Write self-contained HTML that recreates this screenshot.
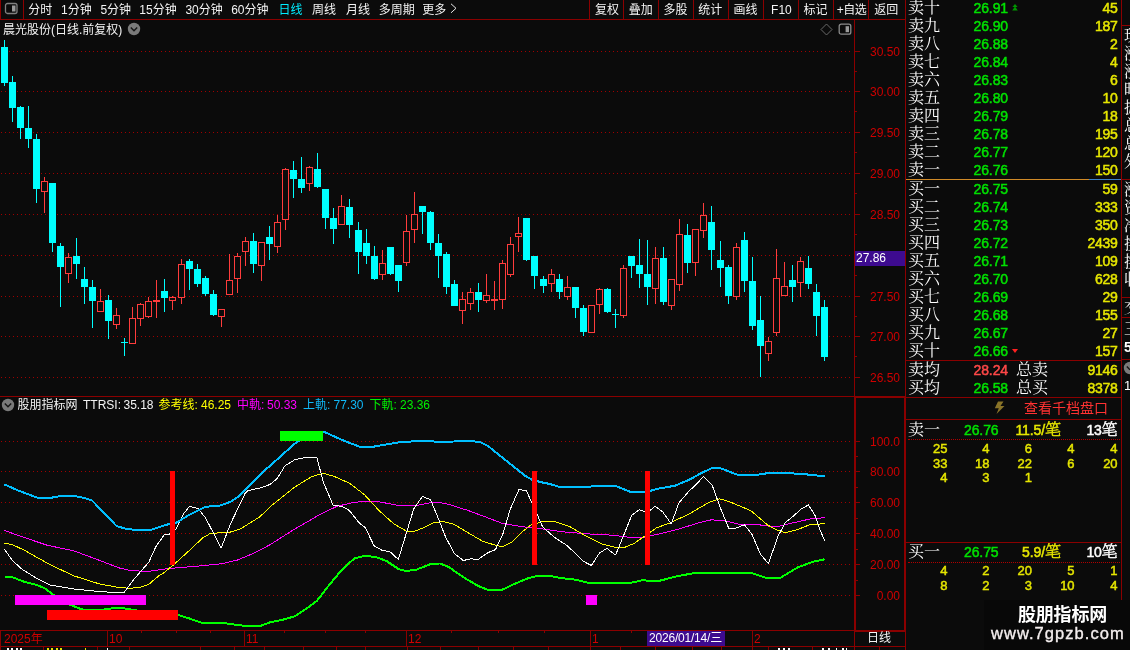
<!DOCTYPE html>
<html lang="zh-CN"><head><meta charset="utf-8"><title>晨光股份 日线</title>
<style>
html,body{margin:0;padding:0;background:#0b0b0b;}
body{width:1130px;height:650px;position:relative;overflow:hidden;font-family:"Liberation Sans","Noto Sans CJK SC",sans-serif;color:#fff;}
.abs{position:absolute;}
.vline{width:1px;background:#8b0000;}
.hline{height:1px;background:#8b0000;}
.tick{height:1px;background:#8b0000;}
.tb{top:1.7px;font-size:12px;line-height:17px;white-space:nowrap;color:#f4f4f4;}
.cy{color:#00ecff;}
.axl{left:856px;width:44px;text-align:right;font-size:12px;line-height:14px;color:#d00000;}
.t12{font-size:12px;line-height:14px;white-space:nowrap;}
.row{left:906px;width:215px;height:18px;}
.row span{position:absolute;top:0;white-space:nowrap;}
.lab{left:2px;font-family:"Liberation Serif","Noto Serif CJK SC",serif;font-size:16px;line-height:18px;color:#fff;font-weight:400;}
.pr{left:67.5px;font-weight:normal;-webkit-text-stroke:0.5px currentColor;font-size:14px;line-height:18px;letter-spacing:-0.1px;}
.vol{right:3.5px;font-weight:normal;-webkit-text-stroke:0.5px currentColor;font-size:14px;line-height:18px;color:#e6e600;letter-spacing:-0.3px;}
.gr{color:#00e000;}
.rd{color:#ff4848;}
.num{font-weight:normal;-webkit-text-stroke:0.45px currentColor;font-size:13px;line-height:14px;color:#e6e600;text-align:right;width:40px;letter-spacing:0;}
.side{left:1124px;font-family:"Liberation Serif","Noto Serif CJK SC",serif;font-size:16px;line-height:18px;color:#fff;white-space:nowrap;}
#wrap{position:absolute;left:0;top:0;width:1130px;height:650px;will-change:transform;}
</style></head><body><div id="wrap">

<!-- toolbar -->
<div class="abs hline" style="left:0;top:19px;width:906px"></div>
<div class="abs vline" style="left:0;top:0;height:19px"></div>
<div class="abs vline" style="left:23px;top:0;height:19px"></div>
<svg class="abs" style="left:4px;top:2px" width="15" height="14" viewBox="0 0 15 14"><rect x="1.5" y="1.5" width="11.5" height="10" rx="2" fill="none" stroke="#808080" stroke-width="1.3"/><rect x="8" y="3.5" width="3.5" height="6" fill="#9a9a9a"/></svg>
<span class="abs tb" style="left:28.2px">分时</span><span class="abs tb" style="left:61.1px">1分钟</span><span class="abs tb" style="left:100.4px">5分钟</span><span class="abs tb" style="left:139.3px">15分钟</span><span class="abs tb" style="left:185.4px">30分钟</span><span class="abs tb" style="left:231.2px">60分钟</span><span class="abs tb cy" style="left:278.5px">日线</span><span class="abs tb" style="left:311.9px">周线</span><span class="abs tb" style="left:345.9px">月线</span><span class="abs tb" style="left:378.8px">多周期</span><span class="abs tb" style="left:422.3px">更多</span><svg class="abs" style="left:450px;top:2.5px" width="8" height="11" viewBox="0 0 8 11"><path d="M1 0.8 L6 5.3 L1 9.8" stroke="#e8e8e8" stroke-width="1" fill="none"/></svg><div class="abs vline" style="left:589px;top:0;height:19px"></div><div class="abs vline" style="left:623px;top:0;height:19px"></div><div class="abs vline" style="left:658px;top:0;height:19px"></div><div class="abs vline" style="left:693px;top:0;height:19px"></div><div class="abs vline" style="left:728px;top:0;height:19px"></div><div class="abs vline" style="left:763px;top:0;height:19px"></div><div class="abs vline" style="left:798px;top:0;height:19px"></div><div class="abs vline" style="left:833px;top:0;height:19px"></div><div class="abs vline" style="left:868px;top:0;height:19px"></div><span class="abs tb" style="left:595.1px">复权</span><span class="abs tb" style="left:628.8px">叠加</span><span class="abs tb" style="left:663.4px">多股</span><span class="abs tb" style="left:698.3px">统计</span><span class="abs tb" style="left:733.5px">画线</span><span class="abs tb" style="left:771.1px">F10</span><span class="abs tb" style="left:803.5px">标记</span><span class="abs tb" style="left:836.7px;letter-spacing:-0.5px">+自选</span><span class="abs tb" style="left:874.3px">返回</span>

<!-- chart title -->
<span class="abs t12" style="left:3px;top:22.8px;color:#f4f4f4">晨光股份(日线.前复权)</span>
<svg class="abs" style="left:127px;top:22px" width="14" height="14" viewBox="0 0 14 14"><circle cx="7" cy="7" r="6.2" fill="#7a7a7a"/><path d="M3.8 5.6 L7 8.8 L10.2 5.6" stroke="#151515" stroke-width="1.4" fill="none"/></svg>
<svg class="abs" style="left:820px;top:23px" width="13" height="13" viewBox="0 0 13 13"><path d="M6.5 1 L12 6.5 L6.5 12 L1 6.5 Z" fill="none" stroke="#6a6a6a" stroke-width="1"/></svg>
<svg class="abs" style="left:838px;top:23px" width="14" height="13" viewBox="0 0 14 13"><rect x="1.2" y="1.2" width="11.6" height="10" rx="2" fill="none" stroke="#8a8a8a" stroke-width="1.3"/><rect x="7.6" y="3.2" width="3.4" height="6" fill="#9a9a9a"/></svg>

<svg class="abs" style="left:0;top:20px" width="854" height="376" viewBox="0 0 854 376" shape-rendering="crispEdges"><line x1="1" y1="31.5" x2="851" y2="31.5" stroke="#a00000" stroke-width="1" stroke-dasharray="1 3"/>
<line x1="1" y1="71.5" x2="851" y2="71.5" stroke="#a00000" stroke-width="1" stroke-dasharray="1 3"/>
<line x1="1" y1="112.5" x2="851" y2="112.5" stroke="#a00000" stroke-width="1" stroke-dasharray="1 3"/>
<line x1="1" y1="153.5" x2="851" y2="153.5" stroke="#a00000" stroke-width="1" stroke-dasharray="1 3"/>
<line x1="1" y1="194.5" x2="851" y2="194.5" stroke="#a00000" stroke-width="1" stroke-dasharray="1 3"/>
<line x1="1" y1="235.5" x2="851" y2="235.5" stroke="#a00000" stroke-width="1" stroke-dasharray="1 3"/>
<line x1="1" y1="276.5" x2="851" y2="276.5" stroke="#a00000" stroke-width="1" stroke-dasharray="1 3"/>
<line x1="1" y1="316.5" x2="851" y2="316.5" stroke="#a00000" stroke-width="1" stroke-dasharray="1 3"/>
<line x1="1" y1="357.5" x2="851" y2="357.5" stroke="#a00000" stroke-width="1" stroke-dasharray="1 3"/><g transform="translate(0,-20)"><rect x="4" y="40" width="1" height="46" fill="#00ffff"/>
<rect x="1" y="47" width="7" height="36" fill="#00ffff"/>
<rect x="12" y="76" width="1" height="46" fill="#00ffff"/>
<rect x="9" y="82" width="7" height="26" fill="#00ffff"/>
<rect x="20" y="106" width="1" height="33" fill="#00ffff"/>
<rect x="17" y="107" width="7" height="21" fill="#00ffff"/>
<rect x="28" y="106" width="1" height="42" fill="#00ffff"/>
<rect x="25" y="128" width="7" height="11" fill="#00ffff"/>
<rect x="36" y="134" width="1" height="69" fill="#00ffff"/>
<rect x="33" y="139" width="7" height="50" fill="#00ffff"/>
<rect x="44" y="177" width="1" height="4" fill="#ff3c3c"/>
<rect x="44" y="192" width="1" height="21" fill="#ff3c3c"/>
<rect x="41.5" y="181.5" width="6" height="10" fill="#0b0b0b" stroke="#ff3c3c" stroke-width="1"/>
<rect x="52" y="183" width="1" height="69" fill="#00ffff"/>
<rect x="49" y="183" width="7" height="60" fill="#00ffff"/>
<rect x="60" y="243" width="1" height="64" fill="#00ffff"/>
<rect x="57" y="246" width="7" height="21" fill="#00ffff"/>
<rect x="68" y="253" width="1" height="4" fill="#ff3c3c"/>
<rect x="68" y="274" width="1" height="9" fill="#ff3c3c"/>
<rect x="65.5" y="257.5" width="6" height="16" fill="#0b0b0b" stroke="#ff3c3c" stroke-width="1"/>
<rect x="76" y="238" width="1" height="41" fill="#00ffff"/>
<rect x="73" y="256" width="7" height="8" fill="#00ffff"/>
<rect x="84" y="267" width="1" height="37" fill="#00ffff"/>
<rect x="81" y="279" width="7" height="8" fill="#00ffff"/>
<rect x="92" y="280" width="1" height="48" fill="#00ffff"/>
<rect x="89" y="287" width="7" height="14" fill="#00ffff"/>
<rect x="100" y="289" width="1" height="12" fill="#ff3c3c"/>
<rect x="97.5" y="301.5" width="6" height="10" fill="#0b0b0b" stroke="#ff3c3c" stroke-width="1"/>
<rect x="108" y="295" width="1" height="44" fill="#00ffff"/>
<rect x="105" y="300" width="7" height="21" fill="#00ffff"/>
<rect x="116" y="308" width="1" height="7" fill="#ff3c3c"/>
<rect x="116" y="325" width="1" height="4" fill="#ff3c3c"/>
<rect x="113.5" y="315.5" width="6" height="9" fill="#0b0b0b" stroke="#ff3c3c" stroke-width="1"/>
<rect x="124" y="338" width="1" height="18" fill="#00ffff"/>
<rect x="121" y="342" width="7" height="1" fill="#00ffff"/>
<rect x="132" y="307" width="1" height="11" fill="#ff3c3c"/>
<rect x="129.5" y="318.5" width="6" height="25" fill="#0b0b0b" stroke="#ff3c3c" stroke-width="1"/>
<rect x="140" y="303" width="1" height="1" fill="#ff3c3c"/>
<rect x="140" y="319" width="1" height="7" fill="#ff3c3c"/>
<rect x="137.5" y="304.5" width="6" height="14" fill="#0b0b0b" stroke="#ff3c3c" stroke-width="1"/>
<rect x="148" y="297" width="1" height="4" fill="#ff3c3c"/>
<rect x="148" y="317" width="1" height="1" fill="#ff3c3c"/>
<rect x="145.5" y="301.5" width="6" height="15" fill="#0b0b0b" stroke="#ff3c3c" stroke-width="1"/>
<rect x="156" y="280" width="1" height="20" fill="#ff3c3c"/>
<rect x="156" y="302" width="1" height="16" fill="#ff3c3c"/>
<rect x="153" y="300" width="7" height="2" fill="#ff3c3c"/>
<rect x="164" y="279" width="1" height="33" fill="#00ffff"/>
<rect x="161" y="291" width="7" height="7" fill="#00ffff"/>
<rect x="172" y="296" width="1" height="1" fill="#ff3c3c"/>
<rect x="172" y="301" width="1" height="9" fill="#ff3c3c"/>
<rect x="169.5" y="297.5" width="6" height="3" fill="#0b0b0b" stroke="#ff3c3c" stroke-width="1"/>
<rect x="181" y="259" width="1" height="5" fill="#ff3c3c"/>
<rect x="181" y="298" width="1" height="6" fill="#ff3c3c"/>
<rect x="178.5" y="264.5" width="6" height="33" fill="#0b0b0b" stroke="#ff3c3c" stroke-width="1"/>
<rect x="189" y="259" width="1" height="31" fill="#00ffff"/>
<rect x="186" y="261" width="7" height="8" fill="#00ffff"/>
<rect x="197" y="264" width="1" height="23" fill="#00ffff"/>
<rect x="194" y="269" width="7" height="15" fill="#00ffff"/>
<rect x="205" y="276" width="1" height="20" fill="#00ffff"/>
<rect x="202" y="278" width="7" height="16" fill="#00ffff"/>
<rect x="213" y="290" width="1" height="26" fill="#00ffff"/>
<rect x="210" y="294" width="7" height="21" fill="#00ffff"/>
<rect x="221" y="317" width="1" height="10" fill="#ff3c3c"/>
<rect x="218.5" y="309.5" width="6" height="7" fill="#0b0b0b" stroke="#ff3c3c" stroke-width="1"/>
<rect x="229" y="254" width="1" height="26" fill="#ff3c3c"/>
<rect x="226.5" y="280.5" width="6" height="14" fill="#0b0b0b" stroke="#ff3c3c" stroke-width="1"/>
<rect x="237" y="253" width="1" height="3" fill="#ff3c3c"/>
<rect x="237" y="279" width="1" height="14" fill="#ff3c3c"/>
<rect x="234.5" y="256.5" width="6" height="22" fill="#0b0b0b" stroke="#ff3c3c" stroke-width="1"/>
<rect x="245" y="237" width="1" height="4" fill="#ff3c3c"/>
<rect x="245" y="252" width="1" height="14" fill="#ff3c3c"/>
<rect x="242.5" y="241.5" width="6" height="10" fill="#0b0b0b" stroke="#ff3c3c" stroke-width="1"/>
<rect x="253" y="233" width="1" height="40" fill="#00ffff"/>
<rect x="250" y="241" width="7" height="23" fill="#00ffff"/>
<rect x="261" y="266" width="1" height="15" fill="#ff3c3c"/>
<rect x="258.5" y="242.5" width="6" height="23" fill="#0b0b0b" stroke="#ff3c3c" stroke-width="1"/>
<rect x="269" y="226" width="1" height="34" fill="#00ffff"/>
<rect x="266" y="237" width="7" height="7" fill="#00ffff"/>
<rect x="277" y="215" width="1" height="7" fill="#ff3c3c"/>
<rect x="277" y="247" width="1" height="6" fill="#ff3c3c"/>
<rect x="274.5" y="222.5" width="6" height="24" fill="#0b0b0b" stroke="#ff3c3c" stroke-width="1"/>
<rect x="285" y="168" width="1" height="1" fill="#ff3c3c"/>
<rect x="285" y="220" width="1" height="10" fill="#ff3c3c"/>
<rect x="282.5" y="169.5" width="6" height="50" fill="#0b0b0b" stroke="#ff3c3c" stroke-width="1"/>
<rect x="293" y="161" width="1" height="37" fill="#00ffff"/>
<rect x="290" y="170" width="7" height="9" fill="#00ffff"/>
<rect x="301" y="157" width="1" height="36" fill="#00ffff"/>
<rect x="298" y="179" width="7" height="9" fill="#00ffff"/>
<rect x="309" y="166" width="1" height="1" fill="#ff3c3c"/>
<rect x="309" y="184" width="1" height="7" fill="#ff3c3c"/>
<rect x="306.5" y="167.5" width="6" height="16" fill="#0b0b0b" stroke="#ff3c3c" stroke-width="1"/>
<rect x="317" y="153" width="1" height="35" fill="#00ffff"/>
<rect x="314" y="169" width="7" height="18" fill="#00ffff"/>
<rect x="325" y="189" width="1" height="40" fill="#00ffff"/>
<rect x="322" y="189" width="7" height="29" fill="#00ffff"/>
<rect x="333" y="208" width="1" height="36" fill="#00ffff"/>
<rect x="330" y="218" width="7" height="11" fill="#00ffff"/>
<rect x="341" y="195" width="1" height="11" fill="#ff3c3c"/>
<rect x="338.5" y="206.5" width="6" height="18" fill="#0b0b0b" stroke="#ff3c3c" stroke-width="1"/>
<rect x="349" y="199" width="1" height="39" fill="#00ffff"/>
<rect x="346" y="207" width="7" height="18" fill="#00ffff"/>
<rect x="358" y="222" width="1" height="52" fill="#00ffff"/>
<rect x="355" y="230" width="7" height="22" fill="#00ffff"/>
<rect x="366" y="229" width="1" height="35" fill="#00ffff"/>
<rect x="363" y="243" width="7" height="13" fill="#00ffff"/>
<rect x="374" y="246" width="1" height="34" fill="#00ffff"/>
<rect x="371" y="256" width="7" height="23" fill="#00ffff"/>
<rect x="382" y="250" width="1" height="13" fill="#ff3c3c"/>
<rect x="382" y="275" width="1" height="5" fill="#ff3c3c"/>
<rect x="379.5" y="263.5" width="6" height="11" fill="#0b0b0b" stroke="#ff3c3c" stroke-width="1"/>
<rect x="390" y="247" width="1" height="28" fill="#00ffff"/>
<rect x="387" y="247" width="7" height="27" fill="#00ffff"/>
<rect x="398" y="265" width="1" height="27" fill="#00ffff"/>
<rect x="395" y="265" width="7" height="16" fill="#00ffff"/>
<rect x="406" y="215" width="1" height="16" fill="#ff3c3c"/>
<rect x="406" y="263" width="1" height="3" fill="#ff3c3c"/>
<rect x="403.5" y="231.5" width="6" height="31" fill="#0b0b0b" stroke="#ff3c3c" stroke-width="1"/>
<rect x="414" y="192" width="1" height="22" fill="#ff3c3c"/>
<rect x="414" y="230" width="1" height="13" fill="#ff3c3c"/>
<rect x="411.5" y="214.5" width="6" height="15" fill="#0b0b0b" stroke="#ff3c3c" stroke-width="1"/>
<rect x="422" y="206" width="1" height="28" fill="#00ffff"/>
<rect x="419" y="206" width="7" height="6" fill="#00ffff"/>
<rect x="430" y="211" width="1" height="39" fill="#00ffff"/>
<rect x="427" y="212" width="7" height="31" fill="#00ffff"/>
<rect x="438" y="234" width="1" height="44" fill="#00ffff"/>
<rect x="435" y="243" width="7" height="13" fill="#00ffff"/>
<rect x="446" y="252" width="1" height="42" fill="#00ffff"/>
<rect x="443" y="254" width="7" height="33" fill="#00ffff"/>
<rect x="454" y="280" width="1" height="26" fill="#00ffff"/>
<rect x="451" y="284" width="7" height="22" fill="#00ffff"/>
<rect x="462" y="292" width="1" height="7" fill="#ff3c3c"/>
<rect x="462" y="311" width="1" height="13" fill="#ff3c3c"/>
<rect x="459.5" y="299.5" width="6" height="11" fill="#0b0b0b" stroke="#ff3c3c" stroke-width="1"/>
<rect x="470" y="288" width="1" height="4" fill="#ff3c3c"/>
<rect x="470" y="304" width="1" height="6" fill="#ff3c3c"/>
<rect x="467.5" y="292.5" width="6" height="11" fill="#0b0b0b" stroke="#ff3c3c" stroke-width="1"/>
<rect x="478" y="283" width="1" height="29" fill="#00ffff"/>
<rect x="475" y="292" width="7" height="8" fill="#00ffff"/>
<rect x="486" y="274" width="1" height="21" fill="#ff3c3c"/>
<rect x="486" y="301" width="1" height="2" fill="#ff3c3c"/>
<rect x="483.5" y="295.5" width="6" height="5" fill="#0b0b0b" stroke="#ff3c3c" stroke-width="1"/>
<rect x="494" y="281" width="1" height="18" fill="#ff3c3c"/>
<rect x="494" y="301" width="1" height="9" fill="#ff3c3c"/>
<rect x="491" y="299" width="7" height="2" fill="#ff3c3c"/>
<rect x="502" y="260" width="1" height="3" fill="#ff3c3c"/>
<rect x="502" y="300" width="1" height="9" fill="#ff3c3c"/>
<rect x="499.5" y="263.5" width="6" height="36" fill="#0b0b0b" stroke="#ff3c3c" stroke-width="1"/>
<rect x="510" y="237" width="1" height="7" fill="#ff3c3c"/>
<rect x="510" y="275" width="1" height="2" fill="#ff3c3c"/>
<rect x="507.5" y="244.5" width="6" height="30" fill="#0b0b0b" stroke="#ff3c3c" stroke-width="1"/>
<rect x="518" y="217" width="1" height="16" fill="#ff3c3c"/>
<rect x="518" y="237" width="1" height="15" fill="#ff3c3c"/>
<rect x="515.5" y="233.5" width="6" height="3" fill="#0b0b0b" stroke="#ff3c3c" stroke-width="1"/>
<rect x="526" y="218" width="1" height="43" fill="#00ffff"/>
<rect x="523" y="218" width="7" height="42" fill="#00ffff"/>
<rect x="534" y="256" width="1" height="33" fill="#00ffff"/>
<rect x="531" y="256" width="7" height="20" fill="#00ffff"/>
<rect x="543" y="276" width="1" height="17" fill="#00ffff"/>
<rect x="540" y="279" width="7" height="7" fill="#00ffff"/>
<rect x="551" y="269" width="1" height="5" fill="#ff3c3c"/>
<rect x="551" y="284" width="1" height="8" fill="#ff3c3c"/>
<rect x="548.5" y="274.5" width="6" height="9" fill="#0b0b0b" stroke="#ff3c3c" stroke-width="1"/>
<rect x="559" y="274" width="1" height="25" fill="#00ffff"/>
<rect x="556" y="279" width="7" height="13" fill="#00ffff"/>
<rect x="567" y="276" width="1" height="11" fill="#ff3c3c"/>
<rect x="567" y="297" width="1" height="3" fill="#ff3c3c"/>
<rect x="564.5" y="287.5" width="6" height="9" fill="#0b0b0b" stroke="#ff3c3c" stroke-width="1"/>
<rect x="575" y="287" width="1" height="31" fill="#00ffff"/>
<rect x="572" y="287" width="7" height="21" fill="#00ffff"/>
<rect x="583" y="305" width="1" height="31" fill="#00ffff"/>
<rect x="580" y="308" width="7" height="24" fill="#00ffff"/>
<rect x="588.5" y="305.5" width="6" height="27" fill="#0b0b0b" stroke="#ff3c3c" stroke-width="1"/>
<rect x="599" y="288" width="1" height="1" fill="#ff3c3c"/>
<rect x="599" y="305" width="1" height="9" fill="#ff3c3c"/>
<rect x="596.5" y="289.5" width="6" height="15" fill="#0b0b0b" stroke="#ff3c3c" stroke-width="1"/>
<rect x="607" y="288" width="1" height="25" fill="#00ffff"/>
<rect x="604" y="289" width="7" height="23" fill="#00ffff"/>
<rect x="615" y="309" width="1" height="19" fill="#00ffff"/>
<rect x="612" y="314" width="7" height="1" fill="#00ffff"/>
<rect x="623" y="265" width="1" height="3" fill="#ff3c3c"/>
<rect x="623" y="316" width="1" height="2" fill="#ff3c3c"/>
<rect x="620.5" y="268.5" width="6" height="47" fill="#0b0b0b" stroke="#ff3c3c" stroke-width="1"/>
<rect x="631" y="256" width="1" height="22" fill="#00ffff"/>
<rect x="628" y="256" width="7" height="10" fill="#00ffff"/>
<rect x="639" y="239" width="1" height="49" fill="#00ffff"/>
<rect x="636" y="265" width="7" height="9" fill="#00ffff"/>
<rect x="647" y="240" width="1" height="65" fill="#00ffff"/>
<rect x="644" y="274" width="7" height="13" fill="#00ffff"/>
<rect x="655" y="247" width="1" height="11" fill="#ff3c3c"/>
<rect x="655" y="289" width="1" height="15" fill="#ff3c3c"/>
<rect x="652.5" y="258.5" width="6" height="30" fill="#0b0b0b" stroke="#ff3c3c" stroke-width="1"/>
<rect x="663" y="247" width="1" height="58" fill="#00ffff"/>
<rect x="660" y="258" width="7" height="44" fill="#00ffff"/>
<rect x="671" y="306" width="1" height="4" fill="#ff3c3c"/>
<rect x="668.5" y="279.5" width="6" height="26" fill="#0b0b0b" stroke="#ff3c3c" stroke-width="1"/>
<rect x="679" y="219" width="1" height="15" fill="#ff3c3c"/>
<rect x="679" y="285" width="1" height="6" fill="#ff3c3c"/>
<rect x="676.5" y="234.5" width="6" height="50" fill="#0b0b0b" stroke="#ff3c3c" stroke-width="1"/>
<rect x="687" y="224" width="1" height="49" fill="#00ffff"/>
<rect x="684" y="235" width="7" height="28" fill="#00ffff"/>
<rect x="695" y="263" width="1" height="13" fill="#ff3c3c"/>
<rect x="692.5" y="229.5" width="6" height="33" fill="#0b0b0b" stroke="#ff3c3c" stroke-width="1"/>
<rect x="703" y="203" width="1" height="12" fill="#ff3c3c"/>
<rect x="703" y="231" width="1" height="7" fill="#ff3c3c"/>
<rect x="700.5" y="215.5" width="6" height="15" fill="#0b0b0b" stroke="#ff3c3c" stroke-width="1"/>
<rect x="711" y="206" width="1" height="64" fill="#00ffff"/>
<rect x="708" y="222" width="7" height="28" fill="#00ffff"/>
<rect x="720" y="241" width="1" height="46" fill="#00ffff"/>
<rect x="717" y="260" width="7" height="8" fill="#00ffff"/>
<rect x="728" y="265" width="1" height="39" fill="#00ffff"/>
<rect x="725" y="267" width="7" height="29" fill="#00ffff"/>
<rect x="736" y="243" width="1" height="4" fill="#ff3c3c"/>
<rect x="736" y="297" width="1" height="3" fill="#ff3c3c"/>
<rect x="733.5" y="247.5" width="6" height="49" fill="#0b0b0b" stroke="#ff3c3c" stroke-width="1"/>
<rect x="744" y="232" width="1" height="60" fill="#00ffff"/>
<rect x="741" y="240" width="7" height="41" fill="#00ffff"/>
<rect x="752" y="257" width="1" height="73" fill="#00ffff"/>
<rect x="749" y="281" width="7" height="45" fill="#00ffff"/>
<rect x="760" y="296" width="1" height="81" fill="#00ffff"/>
<rect x="757" y="320" width="7" height="26" fill="#00ffff"/>
<rect x="768" y="337" width="1" height="4" fill="#ff3c3c"/>
<rect x="768" y="354" width="1" height="7" fill="#ff3c3c"/>
<rect x="765.5" y="341.5" width="6" height="12" fill="#0b0b0b" stroke="#ff3c3c" stroke-width="1"/>
<rect x="776" y="249" width="1" height="29" fill="#ff3c3c"/>
<rect x="776" y="333" width="1" height="3" fill="#ff3c3c"/>
<rect x="773.5" y="278.5" width="6" height="54" fill="#0b0b0b" stroke="#ff3c3c" stroke-width="1"/>
<rect x="784" y="262" width="1" height="24" fill="#ff3c3c"/>
<rect x="781.5" y="286.5" width="6" height="9" fill="#0b0b0b" stroke="#ff3c3c" stroke-width="1"/>
<rect x="792" y="265" width="1" height="37" fill="#00ffff"/>
<rect x="789" y="280" width="7" height="7" fill="#00ffff"/>
<rect x="800" y="257" width="1" height="4" fill="#ff3c3c"/>
<rect x="800" y="283" width="1" height="14" fill="#ff3c3c"/>
<rect x="797.5" y="261.5" width="6" height="21" fill="#0b0b0b" stroke="#ff3c3c" stroke-width="1"/>
<rect x="808" y="256" width="1" height="33" fill="#00ffff"/>
<rect x="805" y="268" width="7" height="16" fill="#00ffff"/>
<rect x="816" y="284" width="1" height="52" fill="#00ffff"/>
<rect x="813" y="292" width="7" height="24" fill="#00ffff"/>
<rect x="824" y="300" width="1" height="61" fill="#00ffff"/>
<rect x="821" y="307" width="7" height="50" fill="#00ffff"/></g></svg>

<!-- price axis -->
<div class="abs vline" style="left:854px;top:19px;height:378px"></div>
<div class="abs vline" style="left:905px;top:0;height:650px"></div>
<div class="abs tick" style="left:855px;top:51px;width:5px"></div><div class="abs axl" style="top:45px">30.50</div><div class="abs tick" style="left:855px;top:91px;width:5px"></div><div class="abs axl" style="top:85px">30.00</div><div class="abs tick" style="left:855px;top:132px;width:5px"></div><div class="abs axl" style="top:126px">29.50</div><div class="abs tick" style="left:855px;top:173px;width:5px"></div><div class="abs axl" style="top:167px">29.00</div><div class="abs tick" style="left:855px;top:214px;width:5px"></div><div class="abs axl" style="top:208px">28.50</div><div class="abs tick" style="left:855px;top:255px;width:5px"></div><div class="abs tick" style="left:855px;top:296px;width:5px"></div><div class="abs axl" style="top:290px">27.50</div><div class="abs tick" style="left:855px;top:336px;width:5px"></div><div class="abs axl" style="top:330px">27.00</div><div class="abs tick" style="left:855px;top:377px;width:5px"></div><div class="abs axl" style="top:371px">26.50</div><div class="abs tick" style="left:855px;top:71px;width:2px"></div><div class="abs tick" style="left:855px;top:111px;width:2px"></div><div class="abs tick" style="left:855px;top:152px;width:2px"></div><div class="abs tick" style="left:855px;top:193px;width:2px"></div><div class="abs tick" style="left:855px;top:234px;width:2px"></div><div class="abs tick" style="left:855px;top:275px;width:2px"></div><div class="abs tick" style="left:855px;top:316px;width:2px"></div><div class="abs tick" style="left:855px;top:356px;width:2px"></div><div class="abs tick" style="left:856px;top:441px;width:4px"></div><div class="abs axl" style="top:435px">100.0</div><div class="abs tick" style="left:856px;top:471px;width:4px"></div><div class="abs axl" style="top:465px">80.00</div><div class="abs tick" style="left:856px;top:502px;width:4px"></div><div class="abs axl" style="top:496px">60.00</div><div class="abs tick" style="left:856px;top:533px;width:4px"></div><div class="abs axl" style="top:527px">40.00</div><div class="abs tick" style="left:856px;top:564px;width:4px"></div><div class="abs axl" style="top:558px">20.00</div><div class="abs tick" style="left:856px;top:595px;width:4px"></div><div class="abs axl" style="top:589px">0.00</div><div class="abs tick" style="left:856px;top:456px;width:2px"></div><div class="abs tick" style="left:856px;top:487px;width:2px"></div><div class="abs tick" style="left:856px;top:518px;width:2px"></div><div class="abs tick" style="left:856px;top:549px;width:2px"></div><div class="abs tick" style="left:856px;top:580px;width:2px"></div>
<div class="abs" style="left:855px;top:251px;width:50px;height:15px;background:#3d0b8f"></div>
<span class="abs t12" style="left:856px;top:251px;color:#fff">27.86</span>

<!-- indicator panel -->
<div class="abs hline" style="left:0;top:396px;width:906px"></div>
<div class="abs" style="left:854px;top:396px;width:48px;height:232px;border:2px solid #8b0000"></div>
<svg class="abs" style="left:1px;top:398px" width="14" height="14" viewBox="0 0 14 14"><circle cx="7" cy="7" r="6.2" fill="#7a7a7a"/><path d="M3.8 5.6 L7 8.8 L10.2 5.6" stroke="#151515" stroke-width="1.4" fill="none"/></svg>
<span class="abs t12" style="left:17.5px;top:398px;color:#f4f4f4">股朋指标网</span>
<span class="abs t12" style="left:83px;top:398px;color:#f4f4f4">TTRSI:</span>
<span class="abs t12" style="left:123.5px;top:398px;color:#f4f4f4">35.18</span>
<span class="abs t12" style="left:158.5px;top:398px;color:#ffff00">参考线:</span>
<span class="abs t12" style="left:201px;top:398px;color:#ffff00">46.25</span>
<span class="abs t12" style="left:237px;top:398px;color:#ff00ff">中軌:</span>
<span class="abs t12" style="left:267px;top:398px;color:#ff00ff">50.33</span>
<span class="abs t12" style="left:303px;top:398px;color:#10b8f8">上軌:</span>
<span class="abs t12" style="left:333.5px;top:398px;color:#10b8f8">77.30</span>
<span class="abs t12" style="left:369.5px;top:398px;color:#00f000">下軌:</span>
<span class="abs t12" style="left:400px;top:398px;color:#00f000">23.36</span>
<svg class="abs" style="left:0;top:397px" width="854" height="233" viewBox="0 0 854 233"><g shape-rendering="crispEdges"><line x1="1" y1="44.5" x2="851" y2="44.5" stroke="#a00000" stroke-width="1" stroke-dasharray="1 3"/>
<line x1="1" y1="74.5" x2="851" y2="74.5" stroke="#a00000" stroke-width="1" stroke-dasharray="1 3"/>
<line x1="1" y1="105.5" x2="851" y2="105.5" stroke="#a00000" stroke-width="1" stroke-dasharray="1 3"/>
<line x1="1" y1="136.5" x2="851" y2="136.5" stroke="#a00000" stroke-width="1" stroke-dasharray="1 3"/>
<line x1="1" y1="167.5" x2="851" y2="167.5" stroke="#a00000" stroke-width="1" stroke-dasharray="1 3"/>
<line x1="1" y1="198.5" x2="851" y2="198.5" stroke="#a00000" stroke-width="1" stroke-dasharray="1 3"/></g><g shape-rendering="crispEdges"><polyline points="4.5,133.5 24.8,140.7 47.0,148.2 74.3,154.0 99.0,163.2 119.0,170.9 131.3,173.7 148.7,174.4 168.5,171.5 198.2,169.1 223.0,166.6 237.9,162.9 255.2,155.6 270.0,147.7 294.8,132.0 319.6,117.7 336.9,109.3 354.2,105.3 369.0,104.0 379.0,104.8 398.8,108.5 413.7,109.0 428.6,106.0 438.5,105.3 448.4,107.3 468.2,113.5 488.0,120.9 502.9,126.6 517.8,129.0 530.2,130.8 542.5,132.0 564.8,135.0 589.6,137.0 614.3,138.3 631.7,140.7 645.0,140.0 659.0,137.0 678.8,132.0 698.6,125.9 711.0,122.9 723.3,123.4 738.2,127.0 753.0,127.0 768.0,129.0 777.9,129.6 792.7,125.9 810.0,122.0 825.0,120.6" fill="none" stroke="#ff00ff" stroke-width="1" stroke-linejoin="round"/>
<polyline points="4.5,146.2 12.4,147.6 24.8,153.5 49.6,167.5 74.3,179.0 99.0,186.8 119.0,190.6 131.3,191.3 141.0,190.0 148.7,187.4 158.6,179.0 163.5,176.0 173.4,168.0 188.3,154.4 203.0,140.7 210.6,136.3 229.0,135.5 240.3,132.0 260.0,119.7 270.0,109.8 294.8,90.0 312.0,79.5 323.3,76.3 334.4,79.5 349.3,86.2 364.2,97.4 379.0,113.5 393.9,127.0 406.3,134.0 413.7,134.5 423.6,130.8 433.5,125.9 443.4,124.6 453.3,127.0 468.2,135.8 483.0,144.5 498.0,148.9 502.9,149.4 512.8,144.5 522.7,134.5 530.2,128.3 542.5,124.6 554.9,124.6 569.7,129.6 584.6,138.3 601.9,146.9 616.8,150.6 624.2,150.6 634.1,146.4 645.0,139.0 656.5,130.8 668.8,126.4 688.7,117.2 708.5,105.6 719.6,101.8 728.3,104.3 750.6,113.5 768.0,128.3 777.9,133.3 785.3,135.8 797.7,132.6 810.0,127.6 825.0,126.7" fill="none" stroke="#ffff00" stroke-width="1" stroke-linejoin="round"/>
<polyline points="4.5,152.4 12.4,163.5 22.3,172.5 37.0,181.5 49.6,187.9 74.3,192.0 99.0,194.5 114.0,195.5 124.0,195.5 133.8,182.6 141.0,174.0 148.7,165.4 156.0,149.4 164.8,137.0 169.7,137.0 176.0,132.0 183.3,117.2 189.5,109.3 198.2,111.5 205.6,121.0 221.2,151.0 230.4,127.0 245.3,96.0 247.8,93.7 260.0,91.0 270.0,87.5 277.4,81.3 284.9,68.9 294.8,62.7 307.2,60.2 317.0,61.0 323.3,85.0 333.2,108.5 341.9,109.3 349.3,113.5 359.2,125.9 365.4,130.8 374.0,148.7 381.5,153.0 390.2,154.9 398.3,162.5 413.7,112.0 422.4,99.4 430.6,102.8 438.5,122.0 445.9,140.7 454.6,156.8 463.3,163.5 470.7,161.8 478.0,162.5 488.0,155.6 495.5,152.6 502.9,137.0 510.3,112.0 519.0,92.4 526.4,93.7 532.0,106.0 537.6,118.4 542.5,129.6 545.0,132.0 554.9,140.7 567.3,148.7 583.4,164.3 591.3,168.5 599.5,156.0 606.9,151.4 615.6,158.0 624.2,137.0 631.7,118.4 639.1,112.7 645.0,114.7 650.0,113.5 655.2,109.3 662.6,114.7 671.3,127.0 678.8,106.0 688.7,94.4 696.1,87.5 703.5,79.5 712.2,88.2 720.9,112.2 728.8,131.3 735.7,131.3 744.4,127.8 751.8,137.0 760.5,157.3 768.4,166.7 777.9,139.5 785.3,125.4 792.7,119.7 801.4,111.7 808.5,108.0 815.0,118.4 820.5,134.0 824.8,143.7" fill="none" stroke="#ffffff" stroke-width="1" stroke-linejoin="round"/>
<polyline points="4.5,179.7 11.0,179.7 24.8,185.0 37.0,188.0 44.6,191.3 53.0,197.5 62.0,203.0 70.6,208.0 81.8,212.4 95.0,213.5 108.0,212.0 116.5,210.6 125.0,211.5 140.0,214.0 160.0,216.0 178.0,218.0 188.0,221.0 200.7,225.5 223.0,226.0 245.3,229.0 260.0,229.0 270.0,225.3 282.4,222.8 294.8,219.3 307.2,211.0 317.0,203.7 329.5,187.6 341.9,172.7 354.2,161.6 365.4,158.6 376.5,160.3 386.5,164.0 398.8,172.2 406.3,174.0 416.2,172.7 431.0,167.0 439.7,166.5 448.4,169.8 463.3,180.2 478.0,188.8 488.0,193.0 501.7,193.0 512.8,187.6 527.7,181.4 537.6,178.9 550.0,178.9 560.0,180.9 574.9,182.6 587.3,185.6 631.9,185.6 641.8,183.4 659.0,183.9 676.5,179.4 696.3,175.7 750.8,175.7 765.6,180.7 780.5,180.7 797.9,170.3 812.7,164.8 824.6,162.3" fill="none" stroke="#00ff00" stroke-width="2" stroke-linejoin="round"/>
<polyline points="4.5,87.5 18.6,93.7 37.2,100.6 52.0,100.6 62.0,98.9 74.3,98.9 84.2,101.0 92.2,103.6 104.0,116.0 116.5,129.0 125.0,131.6 133.8,132.8 151.0,132.8 158.6,130.3 166.0,127.8 176.0,125.9 188.3,118.4 205.6,109.8 220.5,108.5 230.4,104.8 237.9,99.9 247.8,89.9 262.6,75.0 270.0,68.9 282.4,57.7 294.8,46.6 306.0,39.0 316.0,34.8 324.5,35.0 341.9,42.9 359.2,49.6 374.0,49.6 398.8,45.3 418.7,44.0 443.4,44.8 470.7,44.0 480.6,45.3 488.0,49.0 500.4,59.0 512.8,68.9 525.2,78.8 532.6,83.0 542.5,85.5 550.0,87.0 559.8,90.0 589.6,90.0 594.5,88.5 614.3,88.5 631.7,95.4 645.0,95.4 656.5,92.0 675.0,88.7 688.7,83.0 701.0,76.3 712.2,70.9 719.6,70.9 737.0,77.6 758.0,77.6 770.4,75.8 782.8,75.8 802.6,77.0 820.0,78.8 825.0,79.0" fill="none" stroke="#00bfff" stroke-width="2" stroke-linejoin="round"/><rect x="170" y="74" width="5" height="94" fill="#ff0000"/>
<rect x="532" y="74" width="5" height="94" fill="#ff0000"/>
<rect x="645" y="74" width="5" height="94" fill="#ff0000"/>
<rect x="280" y="34" width="43" height="10" fill="#00ff00"/>
<rect x="15" y="198" width="131" height="10" fill="#ff00ff"/>
<rect x="47" y="213" width="131" height="10" fill="#ff0000"/>
<rect x="586" y="198" width="11" height="10" fill="#ff00ff"/></g></svg>

<!-- time axis -->
<div class="abs hline" style="left:0;top:630px;width:854px"></div>
<div class="abs hline" style="left:0;top:646px;width:906px"></div>
<div class="abs vline" style="left:0;top:630px;height:20px"></div>
<div class="abs vline" style="left:854px;top:630px;height:20px"></div>
<div class="abs vline" style="left:107px;top:630px;height:16px"></div><span class="abs t12" style="left:109px;top:632px;color:#d00000">10</span><div class="abs vline" style="left:244px;top:630px;height:16px"></div><span class="abs t12" style="left:246px;top:632px;color:#d00000">11</span><div class="abs vline" style="left:406px;top:630px;height:16px"></div><span class="abs t12" style="left:408px;top:632px;color:#d00000">12</span><div class="abs vline" style="left:590px;top:630px;height:16px"></div><span class="abs t12" style="left:592px;top:632px;color:#d00000">1</span><div class="abs vline" style="left:752px;top:630px;height:16px"></div><span class="abs t12" style="left:754px;top:632px;color:#d00000">2</span><span class="abs t12" style="left:4px;top:632px;color:#d00000">2025年</span><div class="abs vline" style="left:141px;top:630px;height:3px"></div><div class="abs vline" style="left:176px;top:630px;height:3px"></div><div class="abs vline" style="left:210px;top:630px;height:3px"></div><div class="abs vline" style="left:284px;top:630px;height:3px"></div><div class="abs vline" style="left:325px;top:630px;height:3px"></div><div class="abs vline" style="left:365px;top:630px;height:3px"></div><div class="abs vline" style="left:451px;top:630px;height:3px"></div><div class="abs vline" style="left:498px;top:630px;height:3px"></div><div class="abs vline" style="left:544px;top:630px;height:3px"></div><div class="abs vline" style="left:631px;top:630px;height:3px"></div><div class="abs" style="left:647px;top:631px;width:78px;height:15px;background:#3d0b8f"></div><span class="abs t12" style="left:649px;top:631px;color:#fff;letter-spacing:-0.2px">2026/01/14/三</span><div class="abs vline" style="left:43px;top:646px;height:4px"></div><div class="abs vline" style="left:97px;top:646px;height:4px"></div><div class="abs vline" style="left:129px;top:646px;height:4px"></div><div class="abs vline" style="left:200px;top:646px;height:4px"></div><div class="abs vline" style="left:234px;top:646px;height:4px"></div><div class="abs vline" style="left:264px;top:646px;height:4px"></div><div class="abs vline" style="left:303px;top:646px;height:4px"></div><div class="abs vline" style="left:336px;top:646px;height:4px"></div><div class="abs vline" style="left:365px;top:646px;height:4px"></div><div class="abs vline" style="left:407px;top:646px;height:4px"></div><div class="abs vline" style="left:440px;top:646px;height:4px"></div><div class="abs vline" style="left:478px;top:646px;height:4px"></div><div class="abs vline" style="left:513px;top:646px;height:4px"></div><div class="abs vline" style="left:548px;top:646px;height:4px"></div><div class="abs vline" style="left:590px;top:646px;height:4px"></div><div class="abs vline" style="left:620px;top:646px;height:4px"></div><div class="abs vline" style="left:655px;top:646px;height:4px"></div><div class="abs vline" style="left:692px;top:646px;height:4px"></div><div class="abs vline" style="left:721px;top:646px;height:4px"></div><div class="abs vline" style="left:752px;top:646px;height:4px"></div><div class="abs vline" style="left:768px;top:646px;height:4px"></div><div class="abs vline" style="left:812px;top:646px;height:4px"></div><div class="abs vline" style="left:854px;top:646px;height:4px"></div><div class="abs vline" style="left:879px;top:646px;height:4px"></div><div class="abs" style="left:7px;top:648px;width:2px;height:2px;background:#fff"></div><div class="abs" style="left:11px;top:648px;width:2px;height:2px;background:#fff"></div><div class="abs" style="left:16px;top:648px;width:2px;height:2px;background:#fff"></div><div class="abs" style="left:20px;top:648px;width:2px;height:2px;background:#fff"></div><div class="abs" style="left:47px;top:648px;width:2px;height:2px;background:#e6e600"></div><div class="abs" style="left:51px;top:648px;width:2px;height:2px;background:#e6e600"></div><div class="abs" style="left:56px;top:648px;width:2px;height:2px;background:#e6e600"></div><div class="abs" style="left:60px;top:648px;width:2px;height:2px;background:#e6e600"></div><div class="abs" style="left:85px;top:648px;width:1px;height:2px;background:#e6e600"></div><div class="abs" style="left:107px;top:648px;width:1px;height:2px;background:#fff"></div><div class="abs" style="left:778px;top:648px;width:2px;height:2px;background:#fff"></div><div class="abs" style="left:783px;top:648px;width:2px;height:2px;background:#fff"></div><div class="abs" style="left:788px;top:648px;width:2px;height:2px;background:#fff"></div><div class="abs" style="left:822px;top:648px;width:2px;height:2px;background:#fff"></div><div class="abs" style="left:828px;top:648px;width:2px;height:2px;background:#fff"></div><div class="abs" style="left:836px;top:648px;width:1px;height:2px;background:#fff"></div><div class="abs" style="left:842px;top:648px;width:2px;height:2px;background:#fff"></div><div class="abs" style="left:846px;top:648px;width:1px;height:2px;background:#fff"></div>
<span class="abs t12" style="left:867px;top:631px;color:#f4f4f4">日线</span>

<!-- order book -->
<div class="abs row" style="top:-1.0px"><span class="lab">卖十</span><span class="pr gr">26.91</span><span class="vol">45</span></div><div class="abs row" style="top:17.0px"><span class="lab">卖九</span><span class="pr gr">26.90</span><span class="vol">187</span></div><div class="abs row" style="top:35.0px"><span class="lab">卖八</span><span class="pr gr">26.88</span><span class="vol">2</span></div><div class="abs row" style="top:53.1px"><span class="lab">卖七</span><span class="pr gr">26.84</span><span class="vol">4</span></div><div class="abs row" style="top:71.1px"><span class="lab">卖六</span><span class="pr gr">26.83</span><span class="vol">6</span></div><div class="abs row" style="top:89.1px"><span class="lab">卖五</span><span class="pr gr">26.80</span><span class="vol">10</span></div><div class="abs row" style="top:107.1px"><span class="lab">卖四</span><span class="pr gr">26.79</span><span class="vol">18</span></div><div class="abs row" style="top:125.1px"><span class="lab">卖三</span><span class="pr gr">26.78</span><span class="vol">195</span></div><div class="abs row" style="top:143.2px"><span class="lab">卖二</span><span class="pr gr">26.77</span><span class="vol">120</span></div><div class="abs row" style="top:161.2px"><span class="lab">卖一</span><span class="pr gr">26.76</span><span class="vol">150</span></div><div class="abs row" style="top:179.6px"><span class="lab">买一</span><span class="pr gr">26.75</span><span class="vol">59</span></div><div class="abs row" style="top:197.6px"><span class="lab">买二</span><span class="pr gr">26.74</span><span class="vol">333</span></div><div class="abs row" style="top:215.6px"><span class="lab">买三</span><span class="pr gr">26.73</span><span class="vol">350</span></div><div class="abs row" style="top:233.6px"><span class="lab">买四</span><span class="pr gr">26.72</span><span class="vol">2439</span></div><div class="abs row" style="top:251.6px"><span class="lab">买五</span><span class="pr gr">26.71</span><span class="vol">109</span></div><div class="abs row" style="top:269.6px"><span class="lab">买六</span><span class="pr gr">26.70</span><span class="vol">628</span></div><div class="abs row" style="top:287.6px"><span class="lab">买七</span><span class="pr gr">26.69</span><span class="vol">29</span></div><div class="abs row" style="top:305.6px"><span class="lab">买八</span><span class="pr gr">26.68</span><span class="vol">155</span></div><div class="abs row" style="top:323.6px"><span class="lab">买九</span><span class="pr gr">26.67</span><span class="vol">27</span></div><div class="abs row" style="top:341.6px"><span class="lab">买十</span><span class="pr gr">26.66</span><span class="vol">157</span></div>
<div class="abs" style="left:906px;top:179px;width:183px;height:1px;background:#d08a28"></div><div class="abs" style="left:1089px;top:179px;width:32px;height:1px;background:#3c82c8"></div><div class="abs vline" style="left:1121px;top:0;height:600px"></div><div class="abs hline" style="left:906px;top:360px;width:216px"></div><div class="abs row" style="top:360.5px"><span class="lab">卖均</span><span class="pr rd">28.24</span><span class="lab" style="left:110px">总卖</span><span class="vol">9146</span></div><div class="abs row" style="top:378.5px"><span class="lab">买均</span><span class="pr gr">26.58</span><span class="lab" style="left:110px">总买</span><span class="vol">8378</span></div><div class="abs hline" style="left:906px;top:397px;width:216px"></div><svg class="abs" style="left:993px;top:401px" width="13" height="14" viewBox="0 0 13 14"><path d="M5 0.5 L10.5 0.5 L7.5 5 L11.5 5 L3.5 13 L5.8 7.2 L1.8 7.2 Z" fill="#8a7428"/></svg><span class="abs" style="left:1024px;top:399px;font-size:14px;line-height:18px;color:#ff3232;white-space:nowrap">查看千档盘口</span><div class="abs hline" style="left:906px;top:419px;width:216px"></div><svg class="abs" style="left:1011.5px;top:3.8px" width="6" height="7" viewBox="0 0 6 7"><path d="M3 0 L5.6 3.1 L0.4 3.1 Z M3 2.6 L5.8 6.4 L0.2 6.4 Z" fill="#009600"/></svg><svg class="abs" style="left:1012px;top:349px" width="6" height="4" viewBox="0 0 6 4"><path d="M0 0 L6 0 L3 4 Z" fill="#ff2020"/></svg><div class="abs row" style="top:420.5px"><span class="lab">卖一</span><span class="pr gr" style="left:58px">26.76</span><span class="pr" style="left:auto;right:60px;color:#e6e600">11.5/<span style="position:static;font-family:'Liberation Serif','Noto Serif CJK SC',serif;font-weight:300;font-size:16px;letter-spacing:0">笔</span></span><span class="vol" style="color:#fff">13<span style="position:static;font-family:'Liberation Serif','Noto Serif CJK SC',serif;font-weight:300;font-size:16px;letter-spacing:0">笔</span></span></div><div class="abs" style="left:908px;top:439.0px;width:212px;height:0;border-top:1px dotted #b00000"></div><span class="abs num" style="left:907.4px;top:441.8px">25</span><span class="abs num" style="left:949.4px;top:441.8px">4</span><span class="abs num" style="left:992.0px;top:441.8px">6</span><span class="abs num" style="left:1034.6px;top:441.8px">4</span><span class="abs num" style="left:1077.6px;top:441.8px">4</span><span class="abs num" style="left:907.4px;top:456.5px">33</span><span class="abs num" style="left:949.4px;top:456.5px">18</span><span class="abs num" style="left:992.0px;top:456.5px">22</span><span class="abs num" style="left:1034.6px;top:456.5px">6</span><span class="abs num" style="left:1077.6px;top:456.5px">20</span><span class="abs num" style="left:907.4px;top:471.2px">4</span><span class="abs num" style="left:949.4px;top:471.2px">3</span><span class="abs num" style="left:992.0px;top:471.2px">1</span><div class="abs hline" style="left:906px;top:542px;width:216px"></div><div class="abs row" style="top:543px"><span class="lab">买一</span><span class="pr gr" style="left:58px">26.75</span><span class="pr" style="left:auto;right:60px;color:#e6e600">5.9/<span style="position:static;font-family:'Liberation Serif','Noto Serif CJK SC',serif;font-weight:300;font-size:16px;letter-spacing:0">笔</span></span><span class="vol" style="color:#fff">10<span style="position:static;font-family:'Liberation Serif','Noto Serif CJK SC',serif;font-weight:300;font-size:16px;letter-spacing:0">笔</span></span></div><div class="abs" style="left:908px;top:561.5px;width:212px;height:0;border-top:1px dotted #b00000"></div><span class="abs num" style="left:907.4px;top:564.3px">4</span><span class="abs num" style="left:949.4px;top:564.3px">2</span><span class="abs num" style="left:992.0px;top:564.3px">20</span><span class="abs num" style="left:1034.6px;top:564.3px">5</span><span class="abs num" style="left:1077.6px;top:564.3px">1</span><span class="abs num" style="left:907.4px;top:579.0px">8</span><span class="abs num" style="left:949.4px;top:579.0px">2</span><span class="abs num" style="left:992.0px;top:579.0px">3</span><span class="abs num" style="left:1034.6px;top:579.0px">10</span><span class="abs num" style="left:1077.6px;top:579.0px">4</span><div class="abs hline" style="left:1122px;top:25px;width:8px"></div><span class="abs side" style="top:26.5px">现</span><span class="abs side" style="top:44.5px">涨</span><span class="abs side" style="top:62.5px">涨</span><span class="abs side" style="top:80.5px">昨</span><span class="abs side" style="top:98.5px">振</span><span class="abs side" style="top:116.5px">总</span><span class="abs side" style="top:134.5px">总</span><span class="abs side" style="top:152.5px">外</span><div class="abs hline" style="left:1122px;top:179px;width:8px"></div><span class="abs side" style="top:180.5px">涨</span><span class="abs side" style="top:198.5px">资</span><span class="abs side" style="top:216.5px">净</span><span class="abs side" style="top:234.5px">换</span><span class="abs side" style="top:252.5px">换</span><span class="abs side" style="top:270.5px">收</span><div class="abs hline" style="left:1122px;top:297px;width:8px"></div><span class="abs side" style="top:299px">交</span><div class="abs hline" style="left:1122px;top:317px;width:8px"></div><span class="abs side" style="top:320px">三</span><span class="abs" style="left:1124px;top:338px;font-weight:bold;font-size:14px;line-height:18px;color:#fff">5</span><div class="abs hline" style="left:1122px;top:359px;width:8px"></div><svg class="abs" style="left:1123px;top:361px" width="7" height="14" viewBox="0 0 7 14"><circle cx="7" cy="7" r="6.2" fill="#7a7a7a"/><path d="M3.8 5.6 L7 8.8" stroke="#151515" stroke-width="1.4" fill="none"/></svg><span class="abs" style="left:1124px;top:377px;font-size:13px;line-height:18px;color:#fff">1</span><div class="abs" style="left:984px;top:600px;width:146px;height:50px;background:#080808"></div><span class="abs" style="left:1018px;top:602px;font-size:18px;line-height:26px;font-weight:bold;color:#fff;white-space:nowrap;letter-spacing:-0.2px">股朋指标网</span><span class="abs" style="left:991px;top:622px;font-size:16.5px;line-height:22px;font-weight:normal;color:#f4eeee;white-space:nowrap;letter-spacing:1.05px;-webkit-text-stroke:0.35px #f4eeee">www.7gpzb.com</span>

</div></body></html>
